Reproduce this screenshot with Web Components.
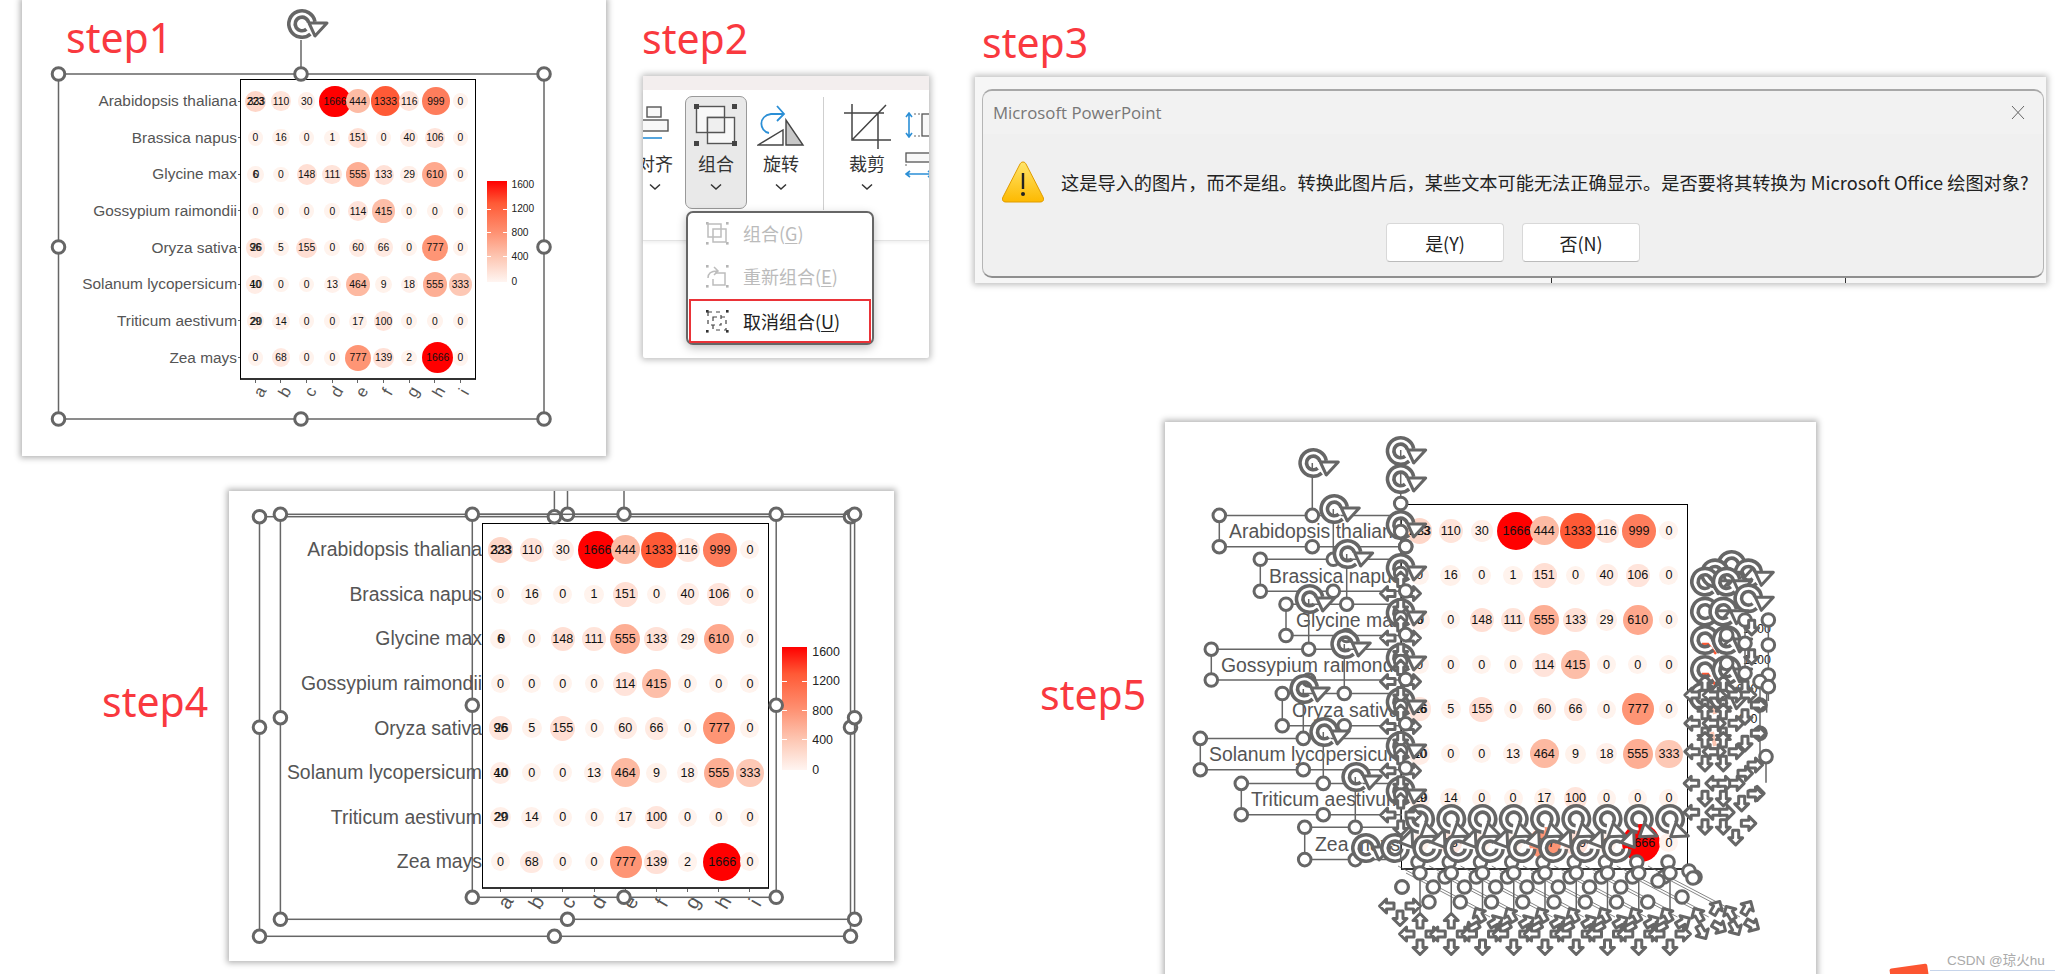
<!DOCTYPE html>
<html lang="zh">
  <head>
    <meta charset="UTF-8" />
    <title>PowerPoint ungroup steps</title>
    <style>
      body {
        margin: 0;
        background: #fff;
      }
    </style>
  </head>
  <body>
    <ppt-canvas>
      <win-panel x="22" y="0" w="584" h="456"></win-panel>
      <win-panel x="229" y="491" w="665" h="470"></win-panel>
      <win-panel x="1165" y="422" w="651" h="560"></win-panel>

      <step-label x="66" y="11">step1</step-label>
      <step-label x="642" y="12">step2</step-label>
      <step-label x="982" y="16">step3</step-label>
      <step-label x="102" y="675">step4</step-label>
      <step-label x="1040" y="668">step5</step-label>

      <heat-chart x="240" y="79" scale="0.822" label-size="15.4" ticks bar></heat-chart>
      <heat-chart x="482" y="523" scale="1" label-size="19.4" bar></heat-chart>
      <heat-chart x="1401" y="504" scale="1" no-labels></heat-chart>

      <ribbon-panel></ribbon-panel>
      <alert-dialog></alert-dialog>

      <float-label x="1229" y="531">Arabidopsis thaliana</float-label>
      <float-label x="1269" y="576">Brassica napus</float-label>
      <float-label x="1296" y="620">Glycine max</float-label>
      <float-label x="1221" y="665">Gossypium raimondii</float-label>
      <float-label x="1292" y="710">Oryza sativa</float-label>
      <float-label x="1209" y="754">Solanum lycopersicum</float-label>
      <float-label x="1251" y="799">Triticum aestivum</float-label>
      <float-label x="1315" y="844">Zea mays</float-label>

      <handle-layer></handle-layer>
      <csdn-mark>CSDN @琼火hu</csdn-mark>
    </ppt-canvas>

    <script>
      const CJK = `"Noto Sans CJK SC", "Noto Sans", sans-serif`;

      function place(el) {
        el.style.left = el.getAttribute("x") + "px";
        el.style.top = el.getAttribute("y") + "px";
        if (el.hasAttribute("w")) el.style.width = el.getAttribute("w") + "px";
        if (el.hasAttribute("h")) el.style.height = el.getAttribute("h") + "px";
      }

      class PptCanvas extends HTMLElement {
        constructor() {
          super();
          this.attachShadow({ mode: "open" });
          this.shadowRoot.innerHTML = `
            <style>
              :host {
                display: block;
                position: relative;
                width: 2055px;
                height: 974px;
                overflow: hidden;
                background: #fff;
              }
            </style>
            <slot></slot>`;
        }
      }

      class WinPanel extends HTMLElement {
        constructor() {
          super();
          this.attachShadow({ mode: "open" });
          this.shadowRoot.innerHTML = `
            <style>
              :host {
                display: block;
                position: absolute;
                background: #fff;
                box-shadow: 0 0 6px 2px rgba(0, 0, 0, 0.3);
              }
            </style>`;
        }
        connectedCallback() {
          place(this);
        }
      }

      class StepLabel extends HTMLElement {
        constructor() {
          super();
          this.attachShadow({ mode: "open" });
          this.shadowRoot.innerHTML = `
            <style>
              :host {
                display: block;
                position: absolute;
                font: 41px/52px "Noto Sans", sans-serif;
                color: #f9393f;
              }
            </style>
            <slot></slot>`;
        }
        connectedCallback() {
          place(this);
        }
      }

      class FloatLabel extends HTMLElement {
        constructor() {
          super();
          this.attachShadow({ mode: "open" });
          this.shadowRoot.innerHTML = `
            <style>
              :host {
                display: block;
                position: absolute;
                transform: translateY(-50%);
                font: 19.4px "Liberation Sans", sans-serif;
                color: #555;
                white-space: nowrap;
              }
            </style>
            <slot></slot>`;
        }
        connectedCallback() {
          place(this);
        }
      }

      const SPECIES = [
        "Arabidopsis thaliana",
        "Brassica napus",
        "Glycine max",
        "Gossypium raimondii",
        "Oryza sativa",
        "Solanum lycopersicum",
        "Triticum aestivum",
        "Zea mays",
      ];
      // first column has two numbers printed on top of each other in the source image
      const VALUES = [
        ["223|333", 110, 30, 1666, 444, 1333, 116, 999, 0],
        [0, 16, 0, 1, 151, 0, 40, 106, 0],
        ["6|0", 0, 148, 111, 555, 133, 29, 610, 0],
        [0, 0, 0, 0, 114, 415, 0, 0, 0],
        ["96|26", 5, 155, 0, 60, 66, 0, 777, 0],
        ["40|10", 0, 0, 13, 464, 9, 18, 555, 333],
        ["29|20", 14, 0, 0, 17, 100, 0, 0, 0],
        [0, 68, 0, 0, 777, 139, 2, 1666, 0],
      ];
      const STOPS = [
        [0, [255, 243, 237]],
        [100, [255, 229, 220]],
        [400, [253, 192, 170]],
        [800, [254, 146, 114]],
        [1333, [255, 90, 54]],
        [1666, [255, 0, 0]],
      ];

      function bubbleColor(v) {
        for (let i = 1; i < STOPS.length; i++) {
          if (v <= STOPS[i][0]) {
            const [a, ca] = STOPS[i - 1];
            const [b, cb] = STOPS[i];
            const t = (v - a) / (b - a);
            const c = ca.map((n, k) => Math.round(n + (cb[k] - n) * t));
            return `rgb(${c.join(",")})`;
          }
        }
        return "#f00";
      }

      class HeatChart extends HTMLElement {
        connectedCallback() {
          if (this.shadowRoot) return;
          this.attachShadow({ mode: "open" });
          const s = parseFloat(this.getAttribute("scale"));
          const labelSize = parseFloat(this.getAttribute("label-size") || 19);
          const noLabels = this.hasAttribute("no-labels");
          const ticks = this.hasAttribute("ticks");
          const labelW = noLabels ? 0 : 240 * s;
          this.style.left = parseFloat(this.getAttribute("x")) - labelW + "px";
          this.style.top = this.getAttribute("y") + "px";

          const cols = 31.2 * s;
          const rows = 44.6 * s;
          let cells = "";
          VALUES.forEach((row) => {
            row.forEach((val) => {
              const parts = String(val).split("|");
              const v = parseFloat(parts[0]);
              const d = (19 + 19 * Math.sqrt(v / 1666)) * s;
              cells += `<div class="cell"><div class="b" style="width:${d}px;height:${d}px;background:${bubbleColor(v)}"></div>${parts
                .map((p, i) => `<span style="left:${i}px">${p}</span>`)
                .join("")}</div>`;
            });
          });
          const labels = noLabels
            ? ""
            : `<div class="labels">${SPECIES.map(
                (n) => `<div class="yl"><span>${n}</span>${ticks ? "<i></i>" : ""}</div>`
              ).join("")}</div>`;
          const xaxis = noLabels
            ? ""
            : `<div class="xaxis">${"abcdefghi"
                .split("")
                .map((c) => `<div class="xl"><i></i><span>${c}</span></div>`)
                .join("")}</div>`;
          const bar = this.hasAttribute("bar")
            ? `<div class="legend"><div class="bar"><u></u><u></u><u></u></div><div class="nums"><span>1600</span><span>1200</span><span>800</span><span>400</span><span>0</span></div></div>`
            : "";

          this.shadowRoot.innerHTML = `
            <style>
              :host {
                display: grid;
                position: absolute;
                grid-template-columns: ${labelW}px ${286.6 * s}px auto;
                grid-template-rows: ${366 * s}px auto;
                font-family: "Liberation Sans", sans-serif;
              }
              .labels {
                grid-column: 1;
                grid-row: 1;
                display: grid;
                grid-auto-rows: ${rows}px;
                padding-top: ${4.5 * s}px;
                font-size: ${labelSize}px;
                color: #555;
                z-index: 1;
              }
              .yl {
                display: flex;
                align-items: center;
                justify-content: flex-end;
                white-space: nowrap;
                gap: ${ticks ? 1 : 0}px;
              }
              .yl i {
                width: 2px;
                height: 1px;
                background: #666;
              }
              .plot {
                grid-column: 2;
                grid-row: 1;
                box-sizing: border-box;
                border: 1px solid #000;
                border-bottom: 2px solid #333;
                background: #fff;
                display: grid;
                grid-template-columns: repeat(9, ${cols}px);
                grid-auto-rows: ${rows}px;
                padding: ${3.5 * s}px ${1.9 * s}px;
                font-size: ${12.6 * s}px;
                color: #111;
              }
              .cell {
                display: grid;
                place-items: center;
              }
              .cell > * {
                grid-area: 1 / 1;
              }
              .cell span {
                position: relative;
              }
              .b {
                border-radius: 50%;
              }
              .xaxis {
                grid-column: 2;
                grid-row: 2;
                display: grid;
                grid-template-columns: repeat(9, ${cols}px);
                padding: 0 ${2.9 * s}px;
                color: #555;
                font-size: ${20 * s}px;
                height: ${28 * s}px;
              }
              .xl {
                display: flex;
                flex-direction: column;
                align-items: center;
              }
              .xl i {
                width: 1px;
                height: 3px;
                background: #666;
              }
              .xl span {
                transform: translate(${5 * s}px, ${-1 * s}px) rotate(-60deg);
              }
              .legend {
                grid-column: 3;
                grid-row: 1;
                display: flex;
                margin: ${123.7 * s}px 0 0 ${13.7 * s}px;
                height: ${123 * s}px;
                gap: ${5 * s}px;
              }
              .bar {
                width: ${25 * s}px;
                background: linear-gradient(#ff0000, #ff5a36 22%, #fe8f70 50%, #fdc6b2 75%, #fff5f1);
                display: flex;
                flex-direction: column;
                justify-content: space-between;
                padding: ${34 * s}px 0 ${30 * s}px;
                box-sizing: border-box;
                position: relative;
              }
              .bar u {
                display: block;
                height: 1px;
                background: linear-gradient(90deg, #fff 20%, transparent 20%, transparent 80%, #fff 80%);
              }
              .nums {
                display: flex;
                flex-direction: column;
                justify-content: space-between;
                padding-top: ${5 * s}px;
                font-size: ${12.4 * s}px;
                line-height: 0;
                color: #222;
              }
            </style>
            ${labels}
            <div class="plot">${cells}</div>
            ${xaxis}
            ${bar}`;
        }
      }

      const ICON_GROUP = `
        <svg width="48" height="46" viewBox="0 0 48 46">
          <rect x="4.5" y="3.5" width="28" height="26" fill="#f8f8f8" stroke="#555" stroke-width="1.4"/>
          <rect x="15.5" y="14.5" width="27" height="26" fill="#f8f8f8" stroke="#555" stroke-width="1.4"/>
          <path d="M15.5 14.5h17v15h-17z" fill="#efefef" stroke="#555" stroke-width="1.4"/>
          <g fill="#444"><rect x="2" y="1" width="5" height="5"/><rect x="40" y="1" width="5" height="5"/><rect x="2" y="38" width="5" height="5"/><rect x="40" y="38" width="5" height="5"/></g>
        </svg>`;
      const ICON_ROTATE = `
        <svg width="48" height="46" viewBox="0 0 48 46">
          <path d="M1 42 26 27V42Z" fill="#fff" stroke="#444" stroke-width="1.4"/>
          <path d="M29 17V42H46Z" fill="#c8c8c8" stroke="#444" stroke-width="1.4"/>
          <path d="M12 30C2 28 1 13 14 11H26" fill="none" stroke="#2b8fd6" stroke-width="1.8"/>
          <path d="M20 3 27 11 20 18" fill="none" stroke="#2b8fd6" stroke-width="1.8"/>
        </svg>`;
      const ICON_CROP = `
        <svg width="48" height="46" viewBox="0 0 48 46" fill="none" stroke="#444" stroke-width="1.5">
          <path d="M1 10H41M9 1V37H49M35 10V46M10 36 43 2"/>
        </svg>`;
      const ICON_ALIGN = `
        <svg width="48" height="46" viewBox="0 0 48 46" fill="none" stroke="#555" stroke-width="1.4">
          <rect x="16" y="4" width="14" height="10" fill="#f8f8f8"/>
          <rect x="4" y="17" width="33" height="11" fill="#f8f8f8"/>
          <path d="M10 35H31" stroke="#2b8fd6" stroke-width="1.6"/>
        </svg>`;
      const CHEV = `<svg width="14" height="8" viewBox="0 0 14 8"><path d="M2 1.5 7 6 12 1.5" fill="none" stroke="#333" stroke-width="1.5"/></svg>`;

      function cornerDots(color) {
        return [[1, 1], [21, 1], [1, 21], [21, 21]]
          .map(([x, y]) => `<rect x="${x}" y="${y}" width="2.6" height="2.6" fill="${color}" stroke="none"/>`)
          .join("");
      }
      const MENU_ICONS = {
        group: `<svg width="24" height="24" viewBox="0 0 24 24" fill="none" stroke="#bdbdbd" stroke-width="1.5">${cornerDots("#b5b5b5")}<rect x="3" y="3" width="13" height="13"/><rect x="8" y="8" width="13" height="13"/></svg>`,
        regroup: `<svg width="24" height="24" viewBox="0 0 24 24" fill="none" stroke="#bdbdbd" stroke-width="1.5">${cornerDots("#b5b5b5")}<path d="M10 9H20V21H8V15"/><path d="M3 14C3 9 7 7 12 7M9 3l4 4-4 4"/></svg>`,
        ungroup: `<svg width="24" height="24" viewBox="0 0 24 24" fill="none" stroke="#444" stroke-width="1.2" stroke-dasharray="4 4">${cornerDots("#333")}<rect x="3" y="3" width="13" height="13"/><rect x="8" y="8" width="13" height="13"/></svg>`,
      };

      class RibbonItem extends HTMLElement {
        constructor() {
          super();
          this.attachShadow({ mode: "open" });
          this.shadowRoot.innerHTML = `
            <style>
              :host {
                display: flex;
                flex-direction: column;
                align-items: center;
                box-sizing: border-box;
                height: 113px;
                padding-top: 7px;
                font: 18px/26px ${CJK};
                color: #333;
                flex: none;
              }
              :host([active]) {
                background: #e9e9e9;
                border: 1px solid #999;
                border-radius: 7px;
                padding-top: 6px;
              }
              .icon {
                height: 46px;
              }
              .label {
                margin-top: 1px;
              }
              .chev {
                margin-top: 2px;
                line-height: 0;
                padding-top: 5px;
              }
            </style>
            <div class="icon"><slot name="icon"></slot></div>
            <div class="label"><slot></slot></div>
            <div class="chev">${CHEV}</div>`;
        }
      }

      class RibbonPanel extends HTMLElement {
        constructor() {
          super();
          this.attachShadow({ mode: "open" });
          this.shadowRoot.innerHTML = `
            <style>
              :host {
                display: block;
                position: absolute;
                left: 643px;
                top: 76px;
                width: 286px;
                height: 282px;
                background: #fff;
                box-shadow: 0 0 6px 2px rgba(0, 0, 0, 0.25);
                border-radius: 2px;
                font-family: ${CJK};
              }
              .strip {
                height: 14px;
                background: #f3eeee;
              }
              .ribbon {
                display: flex;
                height: 151px;
                padding-top: 6px;
                box-sizing: border-box;
                overflow: hidden;
                border-bottom: 1px solid #e3e3e3;
                box-shadow: 0 2px 3px rgba(0, 0, 0, 0.06);
              }
              .sep {
                flex: none;
                width: 1px;
                height: 113px;
                margin: 1px 0 0 8px;
                background: #cfcfcf;
              }
              .small {
                flex: none;
                display: flex;
                flex-direction: column;
                gap: 14px;
                padding-top: 16px;
                margin-left: -5px;
              }
              .menu {
                position: absolute;
                left: 43px;
                top: 135px;
                width: 188px;
                height: 134px;
                box-sizing: border-box;
                border: 2px solid #666;
                border-radius: 7px;
                background: #fff;
                box-shadow: 0 3px 10px rgba(0, 0, 0, 0.25);
                font-size: 18px;
                color: #bbb;
              }
              .mi {
                display: flex;
                align-items: center;
                box-sizing: border-box;
                height: 43px;
                padding-left: 17px;
                padding-bottom: 4px;
                gap: 14px;
                white-space: nowrap;
              }
              .mi svg {
                flex: none;
              }
              .mi.on {
                height: 44px;
                margin: 0 1px;
                padding-left: 14px;
                padding-bottom: 0;
                border: 2.5px solid #ea3338;
                color: #222;
              }
              u {
                text-underline-offset: 2px;
              }
            </style>
            <div class="strip"></div>
            <div class="ribbon">
              <ribbon-item style="width:60px;margin-left:-18px"><span slot="icon">${ICON_ALIGN}</span>对齐</ribbon-item>
              <ribbon-item active style="width:62px"><span slot="icon">${ICON_GROUP}</span>组合</ribbon-item>
              <ribbon-item style="width:68px"><span slot="icon">${ICON_ROTATE}</span>旋转</ribbon-item>
              <div class="sep"></div>
              <ribbon-item style="width:86px"><span slot="icon">${ICON_CROP}</span>裁剪</ribbon-item>
              <div class="small">
                <svg width="28" height="26" viewBox="0 0 28 26" fill="none">
                  <rect x="17" y="2" width="11" height="22" fill="#f8f8f8" stroke="#555" stroke-width="1.3"/>
                  <path d="M4 1V25M1 5 4 1 7 5M1 21 4 25 7 21" stroke="#2b8fd6" stroke-width="1.6"/>
                  <path d="M9 2H15M9 24H15" stroke="#666" stroke-dasharray="2 2"/>
                </svg>
                <svg width="28" height="26" viewBox="0 0 28 26" fill="none">
                  <rect x="1" y="1" width="27" height="9" fill="#f8f8f8" stroke="#555" stroke-width="1.3"/>
                  <path d="M1 12V16M27 12V16" stroke="#666" stroke-dasharray="2 2"/>
                  <path d="M1 22H27M5 19 1 22 5 25M23 19 27 22 23 25" stroke="#2b8fd6" stroke-width="1.6"/>
                </svg>
              </div>
            </div>
            <div class="menu">
              <div class="mi">${MENU_ICONS.group}<span>组合(<u>G</u>)</span></div>
              <div class="mi">${MENU_ICONS.regroup}<span>重新组合(<u>E</u>)</span></div>
              <div class="mi on">${MENU_ICONS.ungroup}<span>取消组合(<u>U</u>)</span></div>
            </div>`;
        }
      }

      class DialogButton extends HTMLElement {
        constructor() {
          super();
          this.attachShadow({ mode: "open" });
          this.shadowRoot.innerHTML = `
            <style>
              :host {
                display: flex;
                align-items: center;
                justify-content: center;
                box-sizing: border-box;
                width: 118px;
                height: 39px;
                background: #fff;
                border: 1px solid #d8d8d8;
                border-bottom-color: #bbb;
                border-radius: 4px;
                font: 18px ${CJK};
                color: #222;
              }
            </style>
            <slot></slot>`;
        }
      }

      class AlertDialog extends HTMLElement {
        constructor() {
          super();
          this.attachShadow({ mode: "open" });
          this.shadowRoot.innerHTML = `
            <style>
              :host {
                display: block;
                position: absolute;
                left: 975px;
                top: 77px;
                width: 1071px;
                height: 206px;
                background: #f6f6f6;
                box-shadow: 0 0 6px 2px rgba(0, 0, 0, 0.25);
              }
              .dlg {
                position: absolute;
                left: 7px;
                top: 12px;
                width: 1062px;
                height: 189px;
                box-sizing: border-box;
                background: #f0f0f0;
                border: 1px solid #b5b5b5;
                border-top: 2px solid #a8a8a8;
                border-bottom: 2px solid #8f8f8f;
                border-radius: 10px;
              }
              .title {
                display: flex;
                align-items: center;
                justify-content: space-between;
                height: 43px;
                padding: 0 18px 0 10px;
                background: #f2f2f2;
                border-radius: 10px 10px 0 0;
                font: 16.8px "Open Sans", sans-serif;
                color: #777;
              }
              .body {
                display: flex;
                align-items: center;
                gap: 17px;
                padding: 27px 0 0 19px;
                font: 18.2px ${CJK};
                color: #222;
                white-space: nowrap;
              }
              .btns {
                display: flex;
                justify-content: center;
                gap: 18px;
                margin-top: 20px;
              }
              .tick {
                position: absolute;
                bottom: 0;
                width: 1px;
                height: 5px;
                background: #333;
              }
            </style>
            <div class="dlg">
              <div class="title">
                <span>Microsoft PowerPoint</span>
                <svg width="14" height="15" viewBox="0 0 14 15"><path d="M1 1 13 14M13 1 1 14" stroke="#666" fill="none"/></svg>
              </div>
              <div class="body">
                <svg width="42" height="42" viewBox="0 0 42 42">
                  <defs><linearGradient id="warn" x1="0" y1="0" x2="0" y2="1"><stop offset="0" stop-color="#ffe56b"/><stop offset="1" stop-color="#fdb900"/></linearGradient></defs>
                  <path d="M21 1C22.5 1 23.500 2 24 3L41 36C42.500 39 41 41 38 41H4C1 41 -.5 39 1 36L18 3C18.500 2 19.500 1 21 1Z" fill="url(#warn)" stroke="#e09c00"/>
                  <rect x="19.800" y="12" width="2.400" height="16" fill="#222"/>
                  <circle cx="21" cy="33" r="2" fill="#222"/>
                </svg>
                <span>这是导入的图片，而不是组。转换此图片后，某些文本可能无法正确显示。是否要将其转换为 Microsoft Office 绘图对象?</span>
              </div>
              <div class="btns">
                <dialog-button>是(Y)</dialog-button>
                <dialog-button>否(N)</dialog-button>
              </div>
            </div>
            <div class="tick" style="left:576px"></div>
            <div class="tick" style="left:870px"></div>`;
        }
      }

      const hdl = (x, y) => `<circle class="h" cx="${x}" cy="${y}" r="6.300"/>`;
      const ln = (a, b, c, d) => `<line class="l" x1="${a}" y1="${b}" x2="${c}" y2="${d}"/>`;
      const thin = (a, b, c, d) => `<line class="l thin" x1="${a}" y1="${b}" x2="${c}" y2="${d}"/>`;
      const rot = (x, y, a = 0) => `<use href="#rot" transform="translate(${x} ${y}) rotate(${a})"/>`;
      const arr = (x, y, a = 0) => `<use href="#arr" transform="translate(${x} ${y}) rotate(${a})"/>`;

      // selection box with its eight handles
      function frame(x0, y0, x1, y1, mx, my) {
        return (
          `<rect class="l" x="${x0}" y="${y0}" width="${x1 - x0}" height="${y1 - y0}" fill="none"/>` +
          [[x0, y0], [mx, y0], [x1, y0], [x0, my], [x1, my], [x0, y1], [mx, y1], [x1, y1]]
            .map(([x, y]) => hdl(x, y))
            .join("")
        );
      }

      function step1() {
        return ln(301, 74, 301, 40) + frame(58.500, 74, 544, 419, 301, 247) + rot(302, 24);
      }

      function step4() {
        return (
          ln(554.400, 491, 554.400, 517) + ln(567.500, 491, 567.500, 514) + ln(624, 491, 624, 514) +
          frame(259.500, 516.700, 850.500, 936.300, 554.400, 727.300) +
          frame(280.400, 514.300, 854.600, 919.300, 567.500, 717.700) +
          frame(472.300, 514.300, 776.200, 897.300, 624, 705.300)
        );
      }

      // text boxes of the ungrouped species labels: left, top, bottom, mid x, rotate icon y
      const TEXT_BOXES = [
        [1219.300, 515.400, 546.700, 1312.300, 463],
        [1260.300, 559.300, 591.300, 1333.300, 509],
        [1286, 604.200, 635.500, 1346.700, 554],
        [1211.300, 649.200, 680, 1308.700, 599],
        [1282.300, 693.500, 725.800, 1344.300, 644],
        [1200.300, 738.400, 769.700, 1303.300, 689],
        [1241.300, 783.400, 814.700, 1323.300, 732],
        [1304.700, 827.300, 859.600, 1355.300, 777],
      ];

      function step5Labels() {
        let out = "";
        TEXT_BOXES.forEach(([x, t, b, m, ry]) => {
          out += ln(x, t, 1402, t) + ln(x, b, 1402, b) + ln(x, t, x, b) + ln(m, t, m, ry);
          out += hdl(x, t) + hdl(x, b) + hdl(m, t) + hdl(m, b) + rot(m + 1, ry);
        });
        return out;
      }

      function step5Column() {
        let out = ln(1400.700, 450, 1400.700, 860);
        [451, 479, 525, 568, 613, 658, 702, 746, 791].forEach((y) => (out += rot(1400.700, y)));
        [503.500, 531.600, 546.700].forEach((y, i) => (out += hdl(i == 2 ? 1405.700 : 1400.700, y)));
        [593.500, 638, 681.600, 726.500, 770.800, 815].forEach((y) => {
          out += hdl(1400.700, y - 20) + hdl(1405.700, y - 47);
          out += arr(1388, y, -90) + arr(1413, y, 90) + arr(1400.700, y - 14, 0) + arr(1400.700, y + 13, 180);
        });
        return out;
      }

      function step5Bottom() {
        let out = "";
        const xs = [];
        for (let i = 0; i < 9; i++) xs.push(1420 + 31.250 * i);
        xs.forEach((x, i) => {
          out += ln(x, 862, x, 915);
          out += thin(x - 22, 866, x + 62, 910);
          out += thin(x - 14, 873, x + 70, 917);
        });
        xs.forEach((x, i) => {
          out += hdl(x - 2, 862) + hdl(x, 873) + hdl(x - 18 + (i == 8 ? 6 : 0), i == 8 ? 881 : 887);
          out += hdl(x + 25, 877) + hdl(x + 9 + (i == 8 ? 3 : 0), i == 8 ? 897 : 902);
        });
        xs.forEach((x, i) => {
          if (i < 2) {
            out += arr(x, 921, 0) + arr(x - 13, 934, -90) + arr(x + 13, 934, 90);
          } else {
            out += arr(x - 3, 915, -30) + arr(x + 13, 922, 60) + arr(x - 10, 928, -120);
            out += arr(x - 13, 934, -90) + arr(x + 13, 934, 90);
          }
          out += arr(x, 947, 180);
        });
        out += arr(1387, 906, -90) + arr(1413, 906, 90) + arr(1400, 918, 180) + hdl(1402, 887);
        // rotate icons last so they sit on the handles
        [1366, 1395, 1427.300, 1458.300, 1490, 1521.700, 1553.300, 1585, 1616.700].forEach((x, i) => {
          out += rot(x, 848, i == 0 ? 0 : -45);
        });
        xs.forEach((x) => (out += rot(x, 819, 45)));
        out += hdl(1689, 871) + hdl(1693, 878);
        [[1698, 915, -30], [1702, 932, 150], [1716, 908, 30], [1719, 927, 120], [1730, 913, -30], [1735, 928, 150], [1747, 908, 30], [1752, 925, 120]]
          .forEach(([x, y, a]) => (out += arr(x, y, a)));
        return out;
      }

      function step5Right() {
        // coordinates read off a crop whose origin is 1680,540 at 3x
        const px = (x) => 1680 + x / 3;
        const py = (y) => 540 + y / 3;
        let out = "";
        [[190, 280, "1600"], [190, 372, "1200"], [170, 460, "800"], [170, 548, "400"]].forEach(([x, y, t]) => {
          out += `<text class="t" x="${px(x)}" y="${py(y)}">${t}</text>`;
        });
        out += `<path d="M1702 644h6l8 10M1702 674h6l8 12" fill="none" stroke="#fb5a36" stroke-width="2.500"/>`;
        out += `<path d="M1712 704l3 10M1712 732l3 14" fill="none" stroke="#fdc6b2" stroke-width="4"/>`;
        [[195, 240], [265, 240], [265, 315], [195, 310], [265, 405], [195, 400], [240, 425], [260, 440], [240, 495], [240, 580], [258, 650]]
          .forEach(([x, y]) => (out += ln(px(x), py(y), px(x), py(y) + 26)));
        [[155, 75], [205, 100], [105, 100], [75, 125], [140, 125], [205, 175], [75, 215], [130, 215], [75, 300], [140, 300], [75, 390], [140, 390], [70, 470], [130, 470]]
          .forEach(([x, y]) => (out += rot(px(x), py(y))));
        [[195, 240], [265, 240], [265, 315], [195, 310], [265, 405], [195, 400], [140, 285], [140, 370], [240, 425], [265, 440], [240, 495], [240, 580], [258, 650]]
          .forEach(([x, y]) => (out += hdl(px(x), py(y))));
        [[215, 262], [215, 350], [195, 445]].forEach(([x, y]) => (out += arr(px(x), py(y), 180)));
        [[75, 465], [130, 465], [75, 550], [130, 550], [75, 635], [130, 635]].forEach(([x, y]) => {
          out += arr(px(x), py(y - 35), 0) + arr(px(x), py(y + 35), 180) + arr(px(x - 38), py(y), -90) + arr(px(x + 38), py(y), 90);
        });
        [[235, 495, 90], [235, 580, 90], [225, 675, 90], [230, 760, 90], [195, 530, 180], [195, 610, 180], [195, 700, 90], [205, 465, 90]]
          .forEach(([x, y, a]) => (out += arr(px(x), py(y), a)));
        // crop with origin 1550,480 at 3x
        const qx = (x) => 1550 + x / 3;
        const qy = (y) => 480 + y / 3;
        [[425, 910, -90], [490, 910, -90], [525, 910, 90], [560, 910, 90], [615, 942, 90], [465, 955, 180], [520, 955, 180], [575, 970, 180], [425, 997, -90], [490, 997, -90], [530, 997, 90], [595, 1030, 90], [465, 1040, 180], [520, 1040, 180], [557, 1072, 180]]
          .forEach(([x, y, a]) => (out += arr(qx(x), qy(y), a)));
        return out;
      }

      class HandleLayer extends HTMLElement {
        constructor() {
          super();
          this.attachShadow({ mode: "open" });
          this.shadowRoot.innerHTML = `
            <style>
              :host {
                display: block;
                position: absolute;
                left: 0;
                top: 0;
                width: 2055px;
                height: 974px;
              }
              svg {
                display: block;
              }
              .h {
                fill: #fff;
                stroke: #666;
                stroke-width: 3;
              }
              .l {
                stroke: #666;
                stroke-width: 1.500;
              }
              .l.thin {
                stroke-width: 0.800;
              }
              .t {
                font: 12.400px "Liberation Sans", sans-serif;
                fill: #222;
              }
            </style>
            <svg width="2055" height="974" viewBox="0 0 2055 974">
              <defs>
                <g id="rot">
                  <path d="M6.400 7.660A10 10 0 1 1 9.850 -1.740" fill="none" stroke="#666" stroke-width="10"/>
                  <path d="M6.950 7.190A10 10 0 1 1 9.950 -1.050" fill="none" stroke="#fff" stroke-width="2.800"/>
                  <path d="M7 -1 25 -1 13 12Z" fill="#fff" stroke="#666" stroke-width="3" stroke-linejoin="round"/>
                </g>
                <path id="arr" d="M0 -7.500 7 -.5H3V7H-3V-.5H-7Z" fill="#fff" stroke="#666" stroke-width="3" stroke-linejoin="round"/>
              </defs>
              ${step1()}
              ${step4()}
              ${step5Labels()}
              ${step5Right()}
              ${step5Bottom()}
              ${step5Column()}
            </svg>`;
        }
      }

      class CsdnMark extends HTMLElement {
        constructor() {
          super();
          this.attachShadow({ mode: "open" });
          this.shadowRoot.innerHTML = `
            <style>
              :host {
                display: block;
                position: absolute;
                left: 1890px;
                top: 948px;
                width: 165px;
                height: 26px;
                font: 13.5px "Liberation Sans", ${CJK};
                color: #aaa;
              }
              .txt {
                position: absolute;
                left: 57px;
                top: 1px;
                white-space: nowrap;
              }
              .tag {
                position: absolute;
                left: 0;
                top: 18px;
                width: 38px;
                height: 12px;
                background: #fc5531;
                transform: rotate(-8deg);
                border-radius: 2px;
              }
              .rule {
                position: absolute;
                left: 40px;
                right: 0;
                top: 22px;
                height: 1px;
                background: #c6d4ea;
              }
            </style>
            <div class="txt"><slot></slot></div>
            <div class="tag"></div>
            <div class="rule"></div>`;
        }
      }

      customElements.define("ppt-canvas", PptCanvas);
      customElements.define("win-panel", WinPanel);
      customElements.define("step-label", StepLabel);
      customElements.define("float-label", FloatLabel);
      customElements.define("heat-chart", HeatChart);
      customElements.define("ribbon-item", RibbonItem);
      customElements.define("ribbon-panel", RibbonPanel);
      customElements.define("dialog-button", DialogButton);
      customElements.define("alert-dialog", AlertDialog);
      customElements.define("handle-layer", HandleLayer);
      customElements.define("csdn-mark", CsdnMark);
    </script>
  </body>
</html>
